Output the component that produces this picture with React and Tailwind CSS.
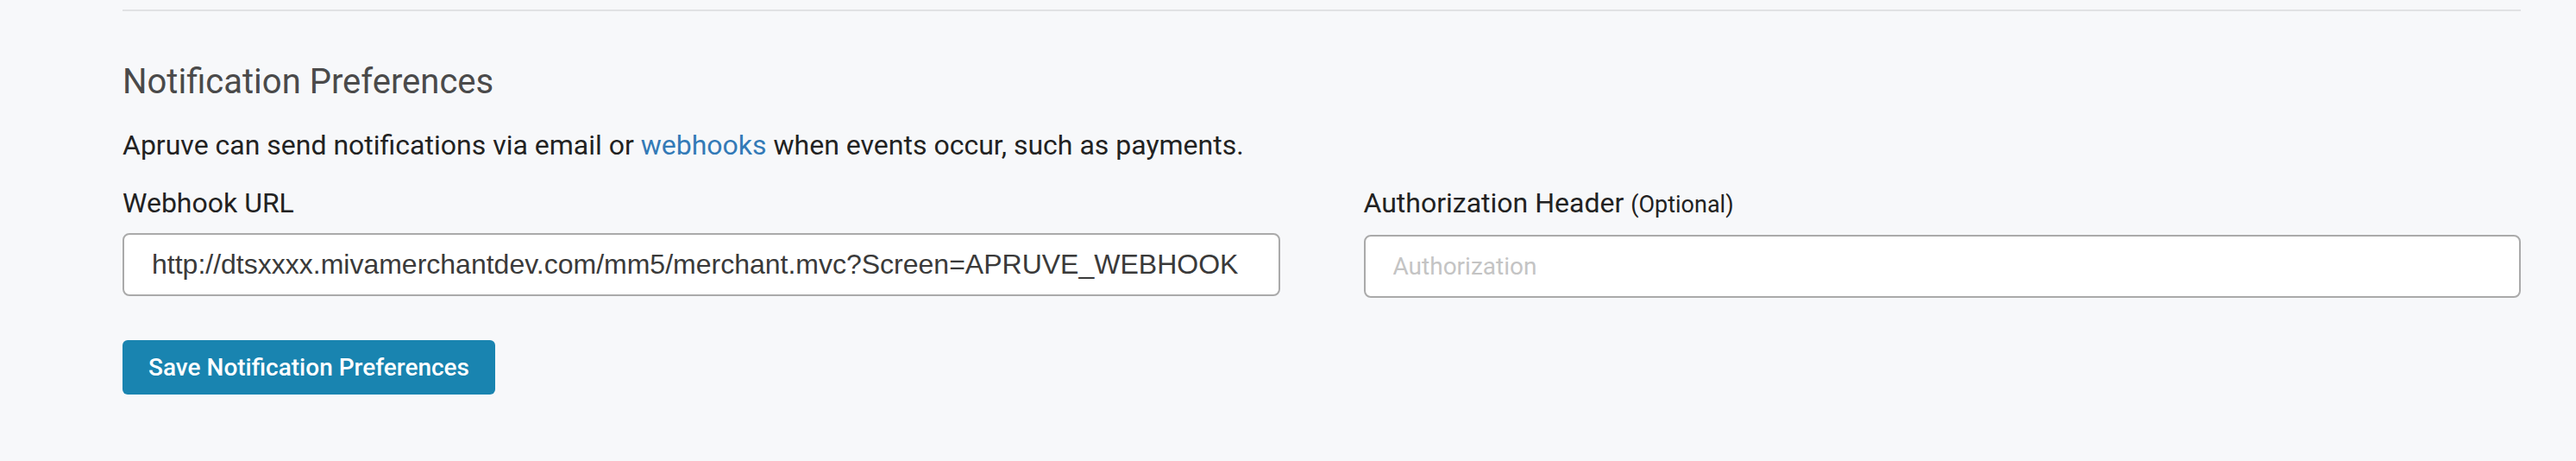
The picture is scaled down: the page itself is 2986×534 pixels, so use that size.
export default function App() {
  return (
    <div className="min-h-[534px] bg-[#f7f8fa] pt-[11px] font-['Roboto',sans-serif]">
      <div className="mx-[142px] w-[2780px]">
        <div className="h-[2px] bg-[#e1e2e4]" />

        <h2 className="mt-[58px] text-[40px] leading-[48px] text-[#4a4a4a]">Notification Preferences</h2>
        <p className="mt-[27px] text-[32px] leading-[44px] text-[#222]">
          Apruve can send notifications via email or{' '}
          <a href="#" className="text-[#337ab7]">webhooks</a> when events occur, such as payments.
        </p>

        <div className="mt-[23px] grid grid-cols-2 gap-[97px]">
          <div>
            <label className="block text-[32px] leading-[44px] text-[#222]">Webhook URL</label>
            <input
              readOnly
              value="http://dtsxxxx.mivamerchantdev.com/mm5/merchant.mvc?Screen=APRUVE_WEBHOOK"
              className="mt-[13px] block h-[73px] w-full rounded-[8px] border-2 border-[#aaaaaa] bg-white px-[32px] font-['Liberation_Sans',Arial,sans-serif] text-[32px] text-[#3a3a3a] outline-none"
            />
          </div>
          <div>
            <label className="block text-[32px] leading-[44px] text-[#222]">
              Authorization Header <span className="text-[27px]">(Optional)</span>
            </label>
            <input
              placeholder="Authorization"
              className="mt-[13px] block h-[73px] w-full rounded-[8px] border-2 border-[#aaaaaa] bg-white px-[32px] text-[28px] text-[#3a3a3a] outline-none placeholder:text-[#c4c4c4]"
            />
          </div>
        </div>

        <button className="mt-[49px] h-[63px] w-[432px] rounded-[6px] bg-[#1984b0] text-[28px] font-medium text-white">
          Save Notification Preferences
        </button>
      </div>
    </div>
  );
}
